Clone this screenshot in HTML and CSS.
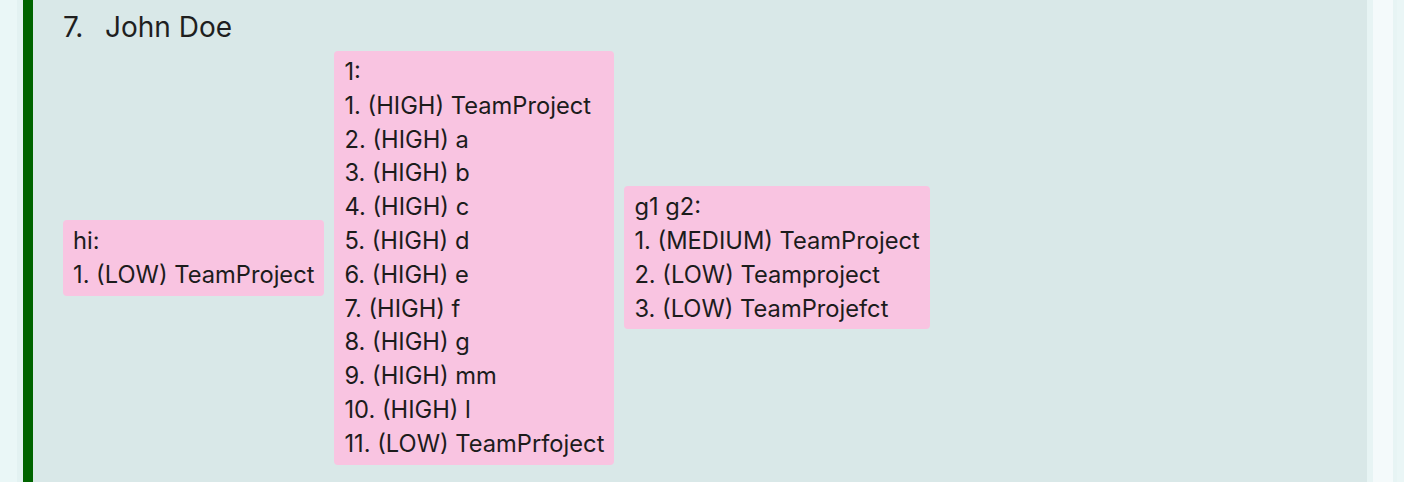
FILE: index.html
```html
<!DOCTYPE html>
<html>
<head>
<meta charset="utf-8">
<link rel="stylesheet" href="styles.css">
</head>
<body>
<div class="page">
  <div class="left-gutter"><div class="g1"></div><div class="g2"></div></div>
  <div class="card">
    <div class="title"><span class="idx">7.</span><span class="name">John Doe</span></div>
    <div class="groups">
      <div class="group">
        <div>hi:</div>
        <div>1. (LOW) TeamProject</div>
      </div>
      <div class="group">
        <div>1:</div>
        <div>1. (HIGH) TeamProject</div>
        <div>2. (HIGH) a</div>
        <div>3. (HIGH) b</div>
        <div>4. (HIGH) c</div>
        <div>5. (HIGH) d</div>
        <div>6. (HIGH) e</div>
        <div>7. (HIGH) f</div>
        <div>8. (HIGH) g</div>
        <div>9. (HIGH) mm</div>
        <div>10. (HIGH) l</div>
        <div>11. (LOW) TeamPrfoject</div>
      </div>
      <div class="group">
        <div>g1 g2:</div>
        <div>1. (MEDIUM) TeamProject</div>
        <div>2. (LOW) Teamproject</div>
        <div>3. (LOW) TeamProjefct</div>
      </div>
    </div>
  </div>
  <div class="right-rail"><div class="r1"></div><div class="r2"></div><div class="r3"></div><div class="r4"></div></div>
</div>
</body>
</html>
```
FILE: styles.css
```css
html, body {
  margin: 0;
  padding: 0;
  height: 100%;
  overflow: hidden;
}
body {
  background: #e9f6f6;
  font-family: Inter, "Noto Sans", sans-serif;
  color: #1c1c1c;
}
.page {
  display: flex;
  height: 482px;
}
.left-gutter {
  display: flex;
  width: 23px;
  flex: none;
}
.g1 { width: 17px; background: #eaf7f7; }
.g2 { width: 6px; background: #e3f2f2; }
.card {
  flex: 1;
  background: #d9e8e8;
  border-left: 10px solid #006400;
  padding: 10px 0 0 30px;
  overflow: hidden;
}
.title {
  font-size: 28px;
  line-height: 34px;
  color: #1f1f1f;
  display: flex;
}
.idx { width: 42px; }
.groups {
  margin-top: 7px;
  display: flex;
  align-items: center;
  gap: 10px;
}
.group {
  background: #f9c4e1;
  border-radius: 4px;
  padding: 4px 10px;
  font-size: 23.7px;
  line-height: 33.8px;
  white-space: nowrap;
}
.right-rail {
  display: flex;
  width: 37px;
  flex: none;
}
.r1 { width: 6px; background: #e7f4f4; }
.r2 { width: 20px; background: #f4fafb; }
.r3 { width: 4px; background: #e7f4f4; }
.r4 { width: 7px; background: #eaf6f6; }
```
